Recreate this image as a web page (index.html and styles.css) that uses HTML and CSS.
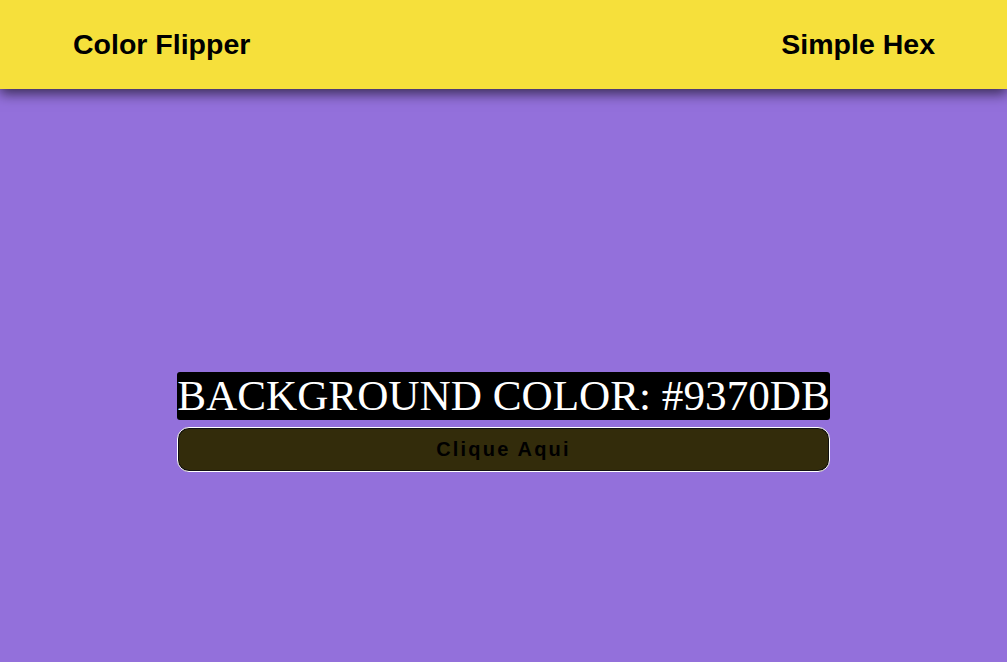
FILE: index.html
```html
<!DOCTYPE html>
<html lang="pt">
<head>
<meta charset="utf-8">
<title>Color Flipper</title>
<link rel="stylesheet" href="styles.css">
</head>
<body>
<nav class="nav">
  <span class="brand">Color Flipper</span>
  <span class="link">Simple Hex</span>
</nav>
<main class="main">
  <div class="box">
    <h2 class="title">BACKGROUND COLOR: #9370DB</h2>
    <button class="btn">Clique Aqui</button>
  </div>
</main>
</body>
</html>
```
FILE: styles.css
```css
html, body { margin: 0; padding: 0; }
body {
  background: #9370DB;
  font-family: "Liberation Sans", Arial, sans-serif;
  overflow: hidden;
}
.nav {
  height: 89px;
  background: #f6e03b;
  display: flex;
  align-items: center;
  justify-content: space-between;
  padding: 0 72px 0 73px;
  box-shadow: 0 5px 12px rgba(0,0,0,0.6);
  position: relative;
  z-index: 1;
}
.brand, .link {
  font-size: 28.5px;
  font-weight: bold;
  color: #000;
}
.main {
  height: 100vh;
  padding-top: 4px;
  box-sizing: border-box;
  display: flex;
  align-items: center;
  justify-content: center;
}
.box {
  display: flex;
  flex-direction: column;
  gap: 7px;
}
.title {
  margin: 0;
  background: #000;
  color: #fff;
  font-family: "Liberation Serif", "Times New Roman", serif;
  font-weight: normal;
  font-size: 43.2px;
  line-height: 48px;
  height: 48px;
  border-radius: 3px;
  white-space: nowrap;
}
.btn {
  height: 45px;
  background: #332c0b;
  border: 1px solid #fff;
  box-shadow: inset 0 0 0 1px #111;
  border-radius: 12px;
  color: #000;
  font-family: "Liberation Sans", Arial, sans-serif;
  font-weight: bold;
  font-size: 20px;
  letter-spacing: 2.2px;
  cursor: pointer;
}
```
